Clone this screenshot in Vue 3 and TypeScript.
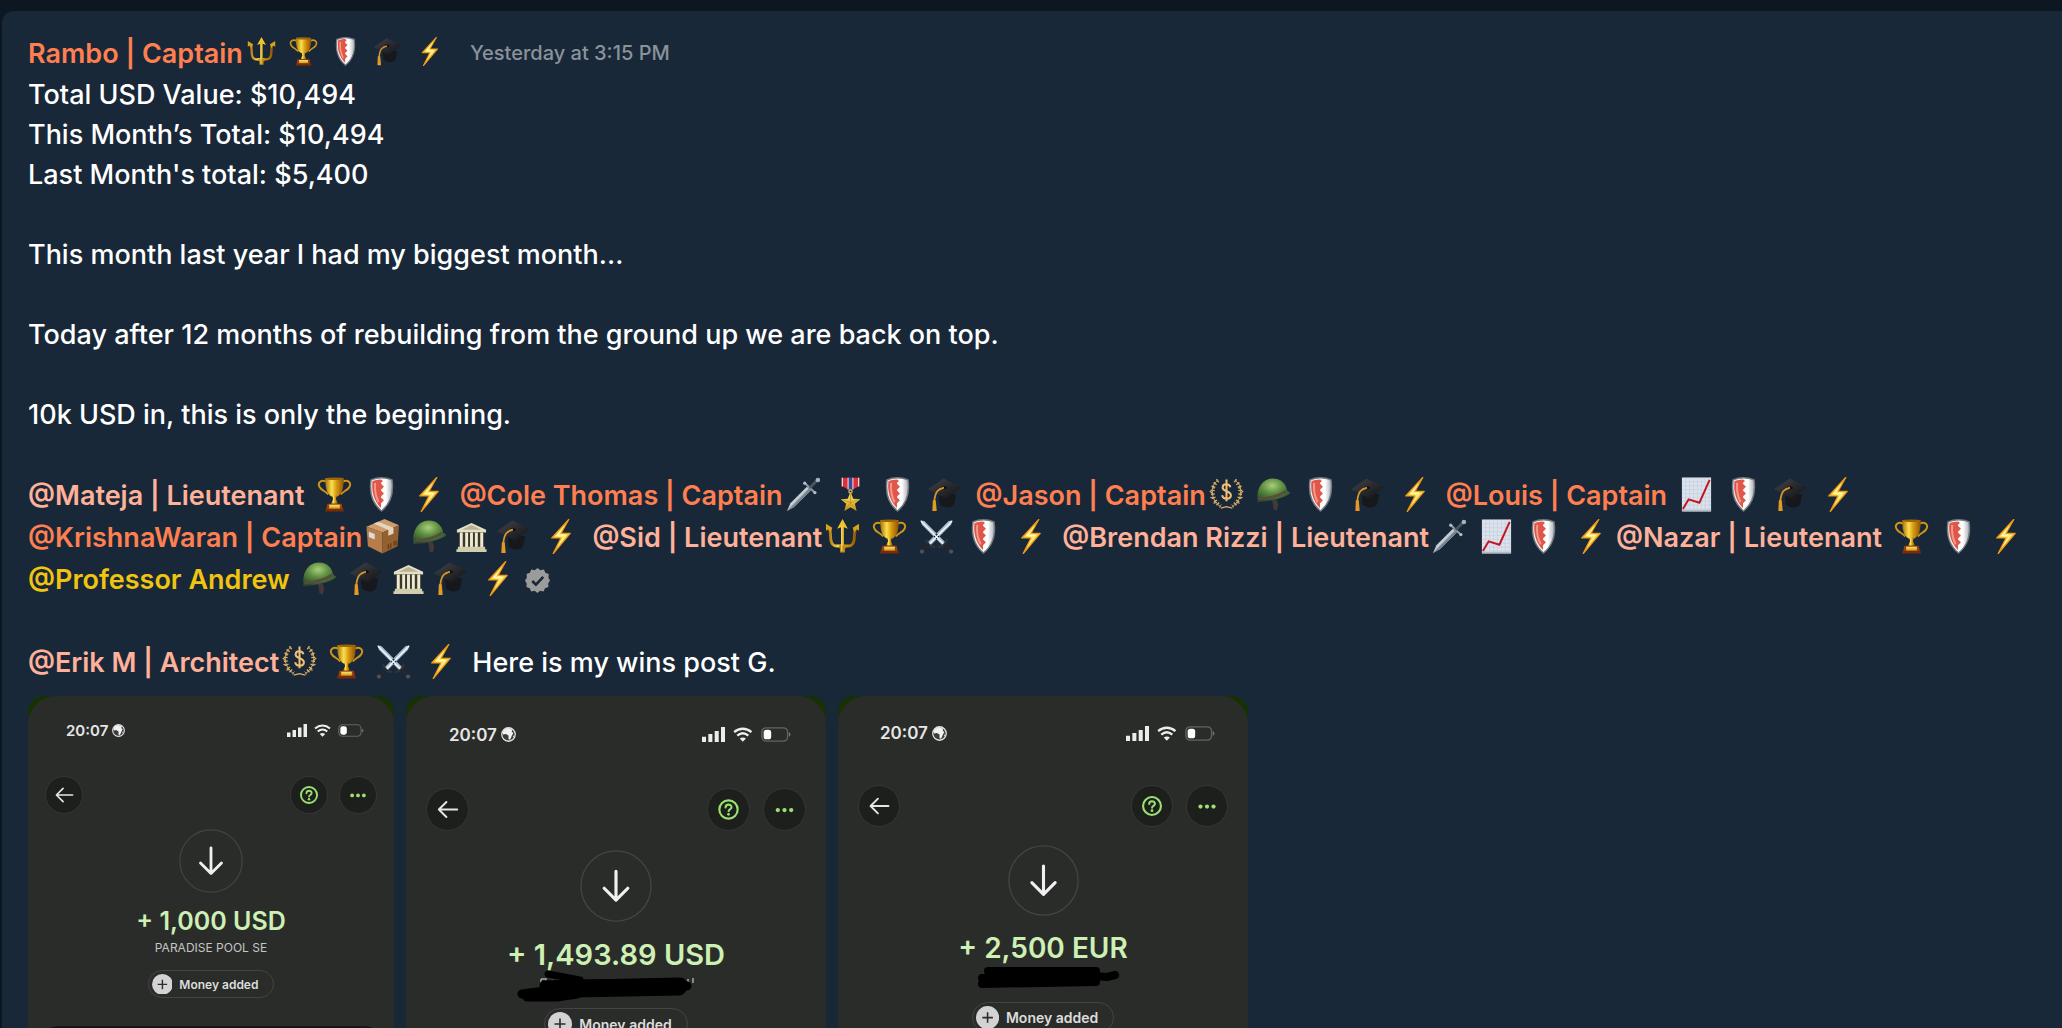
<script setup lang="ts">
type Spacing = 'wide' | 'near' | 'tight'

interface RankIcon {
  name: string
  spacing: Spacing
}

interface Member {
  name: string
  rank: 'captain' | 'lieutenant' | 'professor'
  icons: RankIcon[]
  verified?: boolean
  snug?: boolean
}

interface Receipt {
  id: string
  size: 'small' | 'large' | 'medium'
  amount: string
  source?: string
}

// "trophy" sits a full space away, "+trident" touches the name, "-bank" has no space before it
function parseIcons(list: string): RankIcon[] {
  return list.split(' ').map((token) => {
    if (token.startsWith('+')) return { name: token.slice(1), spacing: 'tight' }
    if (token.startsWith('-')) return { name: token.slice(1), spacing: 'near' }
    return { name: token, spacing: 'wide' }
  })
}

const author: Member = {
  name: 'Rambo | Captain',
  rank: 'captain',
  icons: parseIcons('+trident trophy shield cap bolt'),
}

const lines: string[] = [
  'Total USD Value: $10,494',
  'This Month’s Total: $10,494',
  "Last Month's total: $5,400",
  '',
  'This month last year I had my biggest month...',
  '',
  'Today after 12 months of rebuilding from the ground up we are back on top.',
  '',
  '10k USD in, this is only the beginning.',
]

const mentions: Member[] = [
  { name: '@Mateja | Lieutenant', rank: 'lieutenant', icons: parseIcons('trophy shield bolt') },
  { name: '@Cole Thomas | Captain', rank: 'captain', icons: parseIcons('+dagger medal shield cap') },
  { name: '@Jason | Captain', rank: 'captain', icons: parseIcons('+laurel helmet shield cap bolt') },
  { name: '@Louis | Captain', rank: 'captain', icons: parseIcons('chart shield cap bolt') },
  { name: '@KrishnaWaran | Captain', rank: 'captain', icons: parseIcons('+package helmet -bank -cap bolt') },
  { name: '@Sid | Lieutenant', rank: 'lieutenant', icons: parseIcons('+trident trophy swords shield bolt') },
  {
    name: '@Brendan Rizzi | Lieutenant',
    rank: 'lieutenant',
    icons: parseIcons('+dagger chart shield bolt'),
    snug: true,
  },
  { name: '@Nazar | Lieutenant', rank: 'lieutenant', icons: parseIcons('trophy shield bolt') },
  {
    name: '@Professor Andrew',
    rank: 'professor',
    icons: parseIcons('helmet cap -bank -cap bolt'),
    verified: true,
  },
]

const architect: Member = {
  name: '@Erik M | Architect',
  rank: 'lieutenant',
  icons: parseIcons('+laurel trophy swords bolt'),
}

const receipts: Receipt[] = [
  { id: 'r1', size: 'small', amount: '+ 1,000 USD', source: 'PARADISE POOL SE' },
  { id: 'r2', size: 'large', amount: '+ 1,493.89 USD' },
  { id: 'r3', size: 'medium', amount: '+ 2,500 EUR' },
]
</script>

<template>
  <div class="page">
    <svg class="sprite" aria-hidden="true">
      <defs>
        <linearGradient id="g-gold" x1="0" x2="1" y1="0" y2="0">
          <stop offset="0" stop-color="#a86e08" /><stop offset=".35" stop-color="#fbe04d" />
          <stop offset=".6" stop-color="#d99a12" /><stop offset="1" stop-color="#8d5204" />
        </linearGradient>
        <linearGradient id="g-gold-v" x1="0" x2="0" y1="0" y2="1">
          <stop offset="0" stop-color="#fbe66b" /><stop offset="1" stop-color="#cf9a16" />
        </linearGradient>
        <linearGradient id="g-bolt" x1="0" x2="1" y1="0" y2="1">
          <stop offset="0" stop-color="#f59a12" /><stop offset=".5" stop-color="#fff27a" />
          <stop offset="1" stop-color="#f08a0c" />
        </linearGradient>
        <linearGradient id="g-steel" x1="0" x2="1" y1="0" y2="1">
          <stop offset="0" stop-color="#f2f6f8" /><stop offset="1" stop-color="#8c98a2" />
        </linearGradient>
        <linearGradient id="g-shield" x1="0" x2="1" y1="0" y2="0">
          <stop offset="0" stop-color="#e9eaec" /><stop offset=".7" stop-color="#ffffff" />
          <stop offset="1" stop-color="#a9adb1" />
        </linearGradient>
        <linearGradient id="g-cap" x1="0" x2="1" y1="0" y2="1">
          <stop offset="0" stop-color="#43444a" /><stop offset="1" stop-color="#101114" />
        </linearGradient>
        <radialGradient id="g-helmet" cx=".45" cy=".3" r=".7">
          <stop offset="0" stop-color="#a9cf7c" /><stop offset=".45" stop-color="#5d8f40" />
          <stop offset="1" stop-color="#28492a" />
        </radialGradient>
      </defs>

      <symbol id="icon-trident" viewBox="0 0 36 36">
        <g fill="none" stroke="url(#g-gold)" stroke-linecap="round" stroke-linejoin="round">
          <path d="M3.500 9C8 13 3 24 9 27c3 1.500 6 .5 9 .5s6 1 9-.5c6-3 1-14 5.500-18" stroke-width="3" />
        </g>
        <path d="M16.500 8h3v24h-3z" fill="#dfab1c" />
        <path d="M18 0l5.500 10-4-1.500h-3l-4 1.500z" fill="#f0c52b" />
        <path d="M1 5l6.500 4-1.500 5-2.500-3.500L1 12zM35 5l-6.500 4 1.500 5 2.500-3.500L35 12z" fill="#d8a31c" />
        <path d="M14.500 27h7v3h-1v4.500h-5V30h-1z" fill="#c28a12" />
        <path d="M17.300 8v25" stroke="#fff08a" stroke-width="1" />
      </symbol>

      <symbol id="icon-trophy" viewBox="0 0 36 36">
        <path d="M10 5C4 2 .5 6 2.500 10c2 4 6 4 9 8M26 5c6-3 9.500 1 7.500 5-2 4-6 4-9 8" fill="none" stroke="#cf9418" stroke-width="2" />
        <path d="M8.500 1h19c0 9-1 16-6.500 19h-6C9.500 17 8.500 10 8.500 1z" fill="url(#g-gold)" />
        <ellipse cx="18" cy="1.800" rx="9.500" ry="1.300" fill="#9c6607" />
        <path d="M15.500 19h5l-1 3.500 2 5h-7l2-5z" fill="url(#g-gold)" />
        <path d="M10.500 27.500h15l1 6h-17z" fill="#9a3f0c" />
        <path d="M12.500 28.500h11v4h-11z" fill="url(#g-gold-v)" />
        <path d="M8.500 33h19v2.500h-19z" fill="#7a2c07" />
      </symbol>

      <symbol id="icon-shield" viewBox="0 0 36 36">
        <path d="M18 .8c4 0 7.500.7 10.800 2.200C30.500 15 28 27 18 35 8 27 5.500 15 7.200 3 10.500 1.500 14 .8 18 .8z" fill="url(#g-shield)" stroke="#72787d" stroke-width="1.500" />
        <path d="M17.500 2.600c-3.400.1-6 .6-8.800 1.700C7.500 14 9.800 24 17.500 32v-5l3-3-3-3v-1l3-3-3-3v-1l3-3-3-3V6l2-2z" fill="#e0574a" />
        <path d="M11.500 6c-.8 8 .5 14 3.500 20" fill="none" stroke="#f59a8e" stroke-width="2" />
      </symbol>

      <symbol id="icon-cap" viewBox="0 0 36 36">
        <path d="M12 15l18 3-2 10c-4 5-10 4-15 0z" fill="#17181b" />
        <path d="M1 12.500L17 1.500l18 9L19.500 22z" fill="url(#g-cap)" />
        <ellipse cx="17.500" cy="11" rx="3" ry="1.600" fill="#0d0e10" />
        <path d="M17.500 11C12 12.500 8.500 14 7.500 25" fill="none" stroke="#d9962a" stroke-width="1.800" />
        <path d="M6 24h3l1 11H5.500z" fill="#e39a24" />
      </symbol>

      <symbol id="icon-bolt" viewBox="0 0 36 36">
        <path d="M26.500.5L9 19.500h9.500L10.500 35.500 28 14.800h-9.500z" fill="url(#g-bolt)" stroke="#f09a14" stroke-width="1.300" stroke-linejoin="round" />
        <path d="M23 6L13 17.500h9L15 28l9-11.500h-8z" fill="#fff9b4" />
      </symbol>

      <symbol id="icon-dagger" viewBox="0 0 36 36">
        <path d="M1 35L4.500 27 21.500 10l4 4L8 31z" fill="url(#g-steel)" />
        <path d="M1 35L23.500 12l2 2L8 31z" fill="#77838d" />
        <path d="M19.500 6.500l10 9.500" stroke="#8f9aa2" stroke-width="2" stroke-linecap="round" />
        <path d="M24.500 11L32 3.500" stroke="#4b545c" stroke-width="3" />
        <circle cx="32.800" cy="3" r="2.300" fill="#aab3b9" />
        <circle cx="19.300" cy="6.300" r="1.700" fill="#b4bcc2" /><circle cx="29.700" cy="16" r="1.700" fill="#b4bcc2" />
      </symbol>

      <symbol id="icon-medal" viewBox="0 0 36 36">
        <path d="M9 .8h18v8.500L18 14 9 9.300z" fill="#dd3038" />
        <path d="M16 .8h4v12.500l-2 .8-2-.8z" fill="#2a4fa4" />
        <path d="M15 .8h1v12h-1zM20 .8h1v12h-1zM9 .8h1.200v9H9zM25.800.8H27v9h-1.200z" fill="#f3e8e8" />
        <circle cx="18" cy="15" r="1.700" fill="none" stroke="#e7c04a" stroke-width="1.200" />
        <path d="M18 15.500l2.800 6.800 7.200.5-5.500 4.700 1.800 7.500L18 31l-6.300 4 1.800-7.500L8 22.800l7.200-.5z" fill="url(#g-gold-v)" />
        <path d="M18 17v9.500l-8-3.200M18 26.500l8-3.200M18 26.500l-5 7M18 26.500l5 7" fill="none" stroke="#b98413" stroke-width=".7" />
      </symbol>

      <symbol id="icon-laurel" viewBox="0 0 36 36">
        <g fill="none" stroke="#d8ac66">
          <path d="M9 3.500C1 9 1 23 12 30.500M27 3.500C35 9 35 23 24 30.500" stroke-width="1" />
          <path d="M9.500 3.500C1.500 9 1.500 23 12 30M26.500 3.500C34.500 9 34.500 23 24 30" stroke-width="4" stroke-dasharray="1.500 2.300" />
          <path d="M3 9l2.500 3M.8 14.500l3 2.500M1.500 21l3.500 1M4.500 27l3.500-1M33 9l-2.500 3M35.200 14.500l-3 2.500M34.500 21l-3.500 1M31.500 27l-3.500-1M12 32l6-1.500 6 1.500" stroke-width="1.300" />
          <path d="M22 10.500c-1-4-8-4-8 .3 0 4.700 8.500 3 8.500 8 0 4.700-8 4.700-9 0M18 2.500V25" stroke="#efc075" stroke-width="2.100" />
        </g>
      </symbol>

      <symbol id="icon-helmet" viewBox="0 0 36 36">
        <path d="M16.500 24l4.500-1 2 5-1.500 6.500-3.500-1-.5-5z" fill="#43383a" />
        <path d="M1.500 26C0 12 6 2 17 1.500 27 1.500 31 8 32 14l3.500 2.500C30 22 14 25 1.500 26z" fill="url(#g-helmet)" />
        <path d="M2.500 22.500c10-.5 21-3 29-8.500" fill="none" stroke="#5b4a3f" stroke-width="2.600" />
      </symbol>

      <symbol id="icon-package" viewBox="0 0 36 36">
        <path d="M1.500 8L20 0l15 6.500-17 7.500z" fill="#cf9d6b" />
        <path d="M1.500 8L18 14v21.500L3 28z" fill="#b57d49" />
        <path d="M18 14l17-7.500L33.500 28 18 35.500z" fill="#93602f" />
        <path d="M9 4.700l4.500-1.900 15.800 6.200v6L24 17.300v-6z" fill="#e4d4c0" />
        <path d="M4 13l6 2.500v5.500l-6-2.500z" fill="#dcdcda" />
        <path d="M24 26v5M26.500 25v5M30 22.500v5M32 22v5" stroke="#5f3814" stroke-width="1.200" />
      </symbol>

      <symbol id="icon-bank" viewBox="0 0 36 36">
        <path d="M3 11L18 4l15 7v3H3z" fill="#e4dfc4" />
        <path d="M8 11l10-4.800L28 11z" fill="#b8b193" />
        <path d="M5 14h26v15H5z" fill="#3a372c" />
        <path d="M6 14h3v15H6zM11.500 14h3v15h-3zM16.500 14h3v15h-3zM21.500 14h3v15h-3zM27 14h3v15h-3z" fill="#efead2" />
        <path d="M4 28.500h28V31H4zM2.500 31h31v3h-31z" fill="#d3cdb0" />
      </symbol>

      <symbol id="icon-swords" viewBox="0 0 36 36">
        <path d="M1.500 1.500l4 .5L27 24l-3 3L3 6zM34.500 1.500l-4 .5L9 24l3 3L33 6z" fill="#a9bccb" />
        <path d="M2 2l23.500 24M34 2L10.500 26" stroke="#f5f9fc" stroke-width="1.300" />
        <path d="M20.500 28.500c3.500.5 7.500-3 8-7M15.500 28.500c-3.500.5-7.500-3-8-7" fill="none" stroke="#2f3339" stroke-width="2.500" stroke-linecap="round" />
        <path d="M26 26l7 7M10 26l-7 7" stroke="#24272c" stroke-width="3" />
        <circle cx="33" cy="33.500" r="2.200" fill="#4c525a" /><circle cx="3" cy="33.500" r="2.200" fill="#4c525a" />
      </symbol>

      <symbol id="icon-chart" viewBox="0 0 36 36">
        <path d="M3 .5h30v35H3z" fill="#dde3ec" />
        <path d="M7 .5v35M11 .5v35M15 .5v35M19 .5v35M23 .5v35M27 .5v35M31 .5v35M3 5h30M3 9h30M3 13h30M3 17h30M3 21h30M3 25h30M3 29h30M3 33h30" stroke="#bfcbdc" stroke-width=".6" />
        <path d="M3 34.500h30" stroke="#b4bac3" stroke-width="1.500" />
        <path d="M4 33l6-10 11 3.500L31.500 3" fill="none" stroke="#c3151e" stroke-width="2" stroke-linejoin="round" />
      </symbol>
    </svg>

    <main class="panel">
      <article class="message">
        <header class="author">
          <a class="member" :class="author.rank" href="#profile">
            <span>{{ author.name }}</span>
            <svg v-for="(icon, i) in author.icons" :key="i" class="icon" :class="icon.spacing" aria-hidden="true">
              <use :href="'#icon-' + icon.name" />
            </svg>
          </a>
          <time>Yesterday at 3:15 PM</time>
        </header>

        <div class="text">
          <p v-for="(line, i) in lines" :key="i">{{ line }}</p>
        </div>

        <div class="mentions">
          <a
            v-for="m in mentions"
            :key="m.name"
            class="member"
            :class="[m.rank, { snug: m.snug }]"
            href="#member"
          >
            <span>{{ m.name }}</span>
            <svg v-for="(icon, i) in m.icons" :key="i" class="icon" :class="icon.spacing" aria-hidden="true">
              <use :href="'#icon-' + icon.name" />
            </svg>
            <svg v-if="m.verified" class="verified" viewBox="0 0 24 24" role="img" aria-label="Verified">
              <path d="M12 0l2.800 2.200 3.400-.8 1.300 3.200 3.300 1.200-.3 3.500L24 12l-1.800 2.900.3 3.400-3.300 1.100-1.400 3.200-3.300-.8L12 24l-2.700-2.200-3.400.8-1.300-3.200-3.200-1.200.2-3.400L0 12l1.800-2.900-.3-3.400 3.200-1.200L6 1.400l3.400.8z" fill="#9b9b9b" />
              <path d="M7 12.500l3.500 3.500L17.500 8.500" fill="none" stroke="#182838" stroke-width="2.500" />
            </svg>
          </a>
        </div>

        <p class="closing">
          <a class="member" :class="architect.rank" href="#member">
            <span>{{ architect.name }}</span>
            <svg v-for="(icon, i) in architect.icons" :key="i" class="icon" :class="icon.spacing" aria-hidden="true">
              <use :href="'#icon-' + icon.name" />
            </svg>
          </a>
          <span>Here is my wins post G.</span>
        </p>

        <div class="attachments">
          <section v-for="r in receipts" :key="r.id" class="shot" :class="r.size">
            <div class="screen">
              <div class="status">
                <span class="clock">20:07</span>
                <svg class="globe" viewBox="0 0 14 14" aria-hidden="true">
                  <circle cx="7" cy="7" r="6.300" fill="#3b3c3b" stroke="#e4e4e4" stroke-width="1.200" />
                  <path d="M3 2.500L6.500 1l4 1.500-.5 2 1.500 1L10 8.500 8.500 12 7 11.500 7 8 4.500 6.500 2 7 1.500 5zM11.500 8l1 .5-1.500 2z" fill="#f2f2f2" />
                </svg>
                <svg class="signal" viewBox="0 0 20 13" aria-hidden="true">
                  <path d="M0 8.500h3.500V13H0zM5.500 6H9v7H5.500zM11 3.500h3.500V13H11zM16.500 0H20v13h-3.500z" fill="#ededed" />
                </svg>
                <svg class="wifi" viewBox="0 0 17 13" aria-hidden="true">
                  <path d="M1 4.500c4.500-4 10.500-4 15 0M3.700 7.500c3-2.600 6.600-2.600 9.600 0" fill="none" stroke="#ededed" stroke-width="2" />
                  <path d="M8.500 12.800L5.800 10c1.600-1.300 3.800-1.300 5.400 0z" fill="#ededed" />
                </svg>
                <svg class="battery" viewBox="0 0 28 14" aria-hidden="true">
                  <rect x=".8" y=".8" width="24" height="12.400" rx="4" fill="none" stroke="#626362" stroke-width="1.300" />
                  <rect x="2.500" y="2.500" width="7" height="9" rx="2.500" fill="#fff" />
                  <path d="M26 5c2 .5 2 3.500 0 4z" fill="#737473" />
                </svg>
              </div>

              <div class="toolbar">
                <button type="button" class="round back" aria-label="Back">
                  <svg viewBox="0 0 38 38"><path d="M28 19H11.500M18 12l-7 7 7 7" fill="none" stroke="#e6e6e6" stroke-width="1.800" stroke-linecap="round" stroke-linejoin="round" /></svg>
                </button>
                <button type="button" class="round" aria-label="Help">
                  <svg viewBox="0 0 38 38">
                    <circle cx="19" cy="19" r="8.500" fill="none" stroke="#9be070" stroke-width="2" />
                    <path d="M16.300 17.200c0-3.600 5.500-3.500 5.500-.3 0 2-2.700 2-2.700 3.800" fill="none" stroke="#9be070" stroke-width="1.900" stroke-linecap="round" />
                    <circle cx="19" cy="23.500" r="1.300" fill="#9be070" />
                  </svg>
                </button>
                <button type="button" class="round" aria-label="More">
                  <svg viewBox="0 0 38 38"><g fill="#9be070"><circle cx="12.800" cy="19.500" r="2" /><circle cx="19" cy="19.500" r="2" /><circle cx="25.200" cy="19.500" r="2" /></g></svg>
                </button>
              </div>

              <svg class="direction" viewBox="0 0 64 64" aria-hidden="true">
                <circle cx="32" cy="32" r="31.200" fill="none" stroke="#434443" stroke-width="1.200" />
                <path d="M32 19v25M21.500 34L32 44.500 42.500 34" fill="none" stroke="#f0f0f0" stroke-width="2.800" stroke-linecap="round" stroke-linejoin="round" />
              </svg>

              <strong class="amount">{{ r.amount }}</strong>

              <div class="source">
                <span v-if="r.source">{{ r.source }}</span>
                <svg v-else-if="r.size === 'large'" class="scribble" viewBox="11 0 180 32" role="img" aria-label="Redacted">
                  <path d="M26 9v6M26 9h5v3M35 12c2-3 5-1 5 1M44 12c2-3 5-1 5 1M173 9v4M178 8v5" fill="none" stroke="#a5a5a5" stroke-width="1.500" />
                  <g fill="none" stroke="#000" stroke-linecap="round" stroke-linejoin="round">
                    <path d="M33 4l32 6" stroke-width="7" />
                    <path d="M7 24l30-4M12 27h30l20-3M29 15l39-1 90-1 14 3" stroke-width="9" />
                    <path d="M32 18l40-1 93-2M60 20l104-2" stroke-width="15" />
                  </g>
                </svg>
                <svg v-else class="scribble" viewBox="-2 0 180 32" role="img" aria-label="Redacted">
                  <g fill="none" stroke="#000" stroke-linecap="round" stroke-linejoin="round">
                    <path d="M33 9h108" stroke-width="8" />
                    <path d="M27 16l114-2" stroke-width="8" />
                    <path d="M27 22l114-2" stroke-width="8" />
                    <path d="M140 14l12 1 8-2" stroke-width="8" />
                  </g>
                </svg>
              </div>

              <div class="pill">
                <svg viewBox="0 0 22 22" aria-hidden="true">
                  <circle cx="11" cy="11" r="11" fill="#d2d3d2" />
                  <path d="M11 6v10M6 11h10" stroke="#2b2c2b" stroke-width="1.500" />
                </svg>
                <span>Money added</span>
              </div>

              <div class="sheet"></div>
            </div>
          </section>
        </div>
      </article>
    </main>
  </div>
</template>

<style>
body {
  margin: 0;
  background: #0c1722;
}
</style>

<style scoped>
.page {
  display: flex;
  flex-direction: column;
  box-sizing: border-box;
  height: 100vh;
  padding: 11px 0 0 2px;
  overflow: hidden;
  background: #0c1722;
  color: #fff;
  font-family: Inter, "Noto Sans", sans-serif;
}

.sprite {
  position: absolute;
  width: 0;
  height: 0;
}

.panel {
  flex: 1;
  min-height: 0;
  padding: 20px 10px 0 26px;
  border-top-left-radius: 12px;
  overflow: hidden;
  background: #182838;
}

p {
  margin: 0;
}

.author {
  display: flex;
  align-items: center;
  height: 44px;
}

.author time {
  margin-left: 26px;
  color: #8a929a;
  font-size: 20px;
  font-weight: 500;
}

.text,
.mentions,
.closing {
  font-size: 27px;
  font-weight: 500;
  line-height: 40px;
}

.text p {
  min-height: 40px;
}

.member {
  display: inline-flex;
  align-items: center;
  color: inherit;
  font-size: 27px;
  font-weight: 600;
  text-decoration: none;
  white-space: nowrap;
}

.captain {
  color: #ff7f50;
}

.lieutenant {
  color: #ffb199;
}

.professor {
  color: #f1c40f;
}

.icon {
  flex: none;
  width: 35px;
  height: 35px;
  margin-left: 12px;
}

.mentions .icon,
.closing .icon {
  margin-bottom: 4px;
}

.icon.near {
  margin-left: 7px;
}

.icon.tight {
  margin-left: 3px;
}

.author .icon {
  width: 29px;
  height: 29px;
  margin-bottom: 4px;
  margin-left: 13px;
}

.author .icon.tight {
  margin-left: 4px;
}

.mentions {
  display: flex;
  flex-wrap: wrap;
  margin-top: 40px;
}

.mentions .member,
.closing .member {
  height: 42px;
  margin-right: 14px;
}

.mentions .member.snug {
  margin-right: 8px;
}

.verified {
  width: 25px;
  height: 25px;
  margin-left: 10px;
}

.closing {
  display: flex;
  align-items: center;
  margin-top: 41px;
}

.attachments {
  display: flex;
  align-items: flex-start;
  gap: 12px;
  margin-top: 12px;
}

.shot {
  --width: 366px;
  --status-height: 68px;
  --status-left: 38px;
  --status-right: 30px;
  --unit: 38px;
  --bar-top: 12px;
  --bar-side: 17px;
  --bar-gap: 11px;
  --clock: 15px;
  --glyph: 13px;
  --glyph-gap: 7px;
  --ring: 64px;
  --ring-gap: 15px;
  --amount: 25px;
  --amount-line: 57px;
  --source-height: 18px;
  --pill-height: 28px;
  --pill-gap: 14px;
  --pill-text: 12px;
  flex: none;
  width: var(--width);
  border-radius: 16px;
  overflow: hidden;
  background: #153200;
}

.shot.large {
  --width: 420px;
  --status-height: 77px;
  --status-left: 43px;
  --status-right: 35px;
  --unit: 43px;
  --bar-top: 15px;
  --bar-side: 20px;
  --bar-gap: 13px;
  --clock: 17px;
  --glyph: 15px;
  --glyph-gap: 8px;
  --ring: 72px;
  --ring-gap: 19px;
  --amount: 29px;
  --amount-line: 66px;
  --source-height: 20px;
  --pill-height: 32px;
  --pill-gap: 12px;
  --pill-text: 14px;
}

.shot.medium {
  --width: 410px;
  --status-height: 74px;
  --status-left: 42px;
  --status-right: 33px;
  --unit: 42px;
  --bar-top: 15px;
  --bar-side: 20px;
  --bar-gap: 13px;
  --clock: 17px;
  --glyph: 15px;
  --glyph-gap: 8px;
  --ring: 71px;
  --ring-gap: 18px;
  --amount: 28px;
  --amount-line: 64px;
  --source-height: 20px;
  --pill-height: 31px;
  --pill-gap: 14px;
  --pill-text: 14px;
}

.screen {
  display: flex;
  flex-direction: column;
  align-items: center;
  border-radius: 28px 28px 0 0;
  background: #2a2c2a;
}

.status {
  display: flex;
  align-items: center;
  align-self: stretch;
  height: var(--status-height);
  padding: 0 var(--status-right) 0 var(--status-left);
}

.clock {
  color: #e6e6e6;
  font-size: var(--clock);
  font-weight: 600;
}

.globe {
  height: var(--glyph);
  margin-left: 4px;
}

.signal {
  height: var(--glyph);
  margin-left: auto;
}

.wifi {
  height: var(--glyph);
  margin-left: var(--glyph-gap);
}

.battery {
  height: var(--glyph);
  margin-left: var(--glyph-gap);
}

.toolbar {
  display: flex;
  align-self: stretch;
  gap: var(--bar-gap);
  margin-top: var(--bar-top);
  padding: 0 var(--bar-side);
}

.round {
  box-sizing: border-box;
  width: var(--unit);
  height: var(--unit);
  padding: 0;
  border: 1px solid #353635;
  border-radius: 50%;
  background: #1d1f1d;
}

.round svg {
  display: block;
  width: 100%;
  height: 100%;
}

.back {
  margin-right: auto;
}

.direction {
  width: var(--ring);
  height: var(--ring);
  margin-top: var(--ring-gap);
}

.amount {
  color: #cdf0b4;
  font-size: var(--amount);
  font-weight: 600;
  line-height: var(--amount-line);
}

.source {
  display: flex;
  align-items: center;
  justify-content: center;
  height: var(--source-height);
  margin-top: -12px;
  color: #c4c5c4;
  font-size: 12px;
}

.scribble {
  flex: none;
  width: 180px;
  height: 32px;
  overflow: visible;
}

.pill {
  display: flex;
  align-items: center;
  gap: 7px;
  box-sizing: border-box;
  height: var(--pill-height);
  margin-top: var(--pill-gap);
  padding: 0 15px 0 3px;
  border: 1px solid #434443;
  border-radius: 16px;
  color: #dcdddc;
  font-size: var(--pill-text);
  font-weight: 600;
}

.pill svg {
  height: 80%;
}

.sheet {
  align-self: stretch;
  height: 60px;
  margin: 28px 10px 0;
  border-radius: 20px 20px 0 0;
  background: #151615;
}
</style>
